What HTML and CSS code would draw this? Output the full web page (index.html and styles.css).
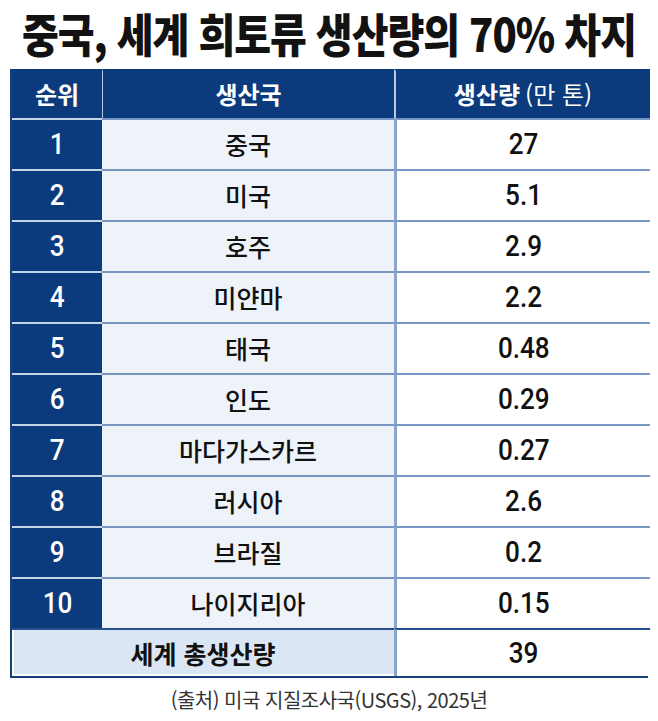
FILE: index.html
```html
<!DOCTYPE html>
<html lang="ko">
<head>
<meta charset="utf-8">
<link rel="stylesheet" href="styles.css">
</head>
<body>
<div class="page">
  <h1 class="title"><span class="title-text">중국, 세계 희토류 생산량의 70% 차지</span></h1>
  <div class="table">
    <div class="cell head head-rank">순위</div>
    <div class="cell head head-name">생산국</div>
    <div class="cell head head-value">생산량 <span class="unit">(만 톤)</span></div>

    <div class="cell rank"><span class="num">1</span></div><div class="cell name">중국</div><div class="cell value"><span class="num">27</span></div>
    <div class="cell rank"><span class="num">2</span></div><div class="cell name">미국</div><div class="cell value"><span class="num">5.1</span></div>
    <div class="cell rank"><span class="num">3</span></div><div class="cell name">호주</div><div class="cell value"><span class="num">2.9</span></div>
    <div class="cell rank"><span class="num">4</span></div><div class="cell name">미얀마</div><div class="cell value"><span class="num">2.2</span></div>
    <div class="cell rank"><span class="num">5</span></div><div class="cell name">태국</div><div class="cell value"><span class="num">0.48</span></div>
    <div class="cell rank"><span class="num">6</span></div><div class="cell name">인도</div><div class="cell value"><span class="num">0.29</span></div>
    <div class="cell rank"><span class="num">7</span></div><div class="cell name">마다가스카르</div><div class="cell value"><span class="num">0.27</span></div>
    <div class="cell rank"><span class="num">8</span></div><div class="cell name">러시아</div><div class="cell value"><span class="num">2.6</span></div>
    <div class="cell rank"><span class="num">9</span></div><div class="cell name">브라질</div><div class="cell value"><span class="num">0.2</span></div>
    <div class="cell rank"><span class="num">10</span></div><div class="cell name">나이지리아</div><div class="cell value"><span class="num">0.15</span></div>

    <div class="cell total-label">세계 총생산량</div>
    <div class="cell total-value"><span class="num">39</span></div>
  </div>
  <p class="source">(출처) 미국 지질조사국(USGS), 2025년</p>
</div>
</body>
</html>
```
FILE: styles.css
```css
* { box-sizing: border-box; }
html, body { margin: 0; padding: 0; background: #ffffff; }
body {
  font-family: Roboto, "Noto Sans CJK KR", sans-serif;
  color: #111111;
}
.page {
  width: 658px;
  height: 721px;
  display: flex;
  flex-direction: column;
  align-items: center;
}
.title {
  margin: 0;
  height: 69px;
  width: 100%;
  display: flex;
  align-items: center;
  justify-content: center;
  padding-bottom: 6px;
  font-family: "Noto Sans CJK KR", sans-serif;
  font-weight: 900;
  font-size: 46px;
  letter-spacing: -1.2px;
  color: #121212;
  white-space: nowrap;
}
.title-text {
  display: inline-block;
  transform: scaleX(0.87);
}
.table {
  width: 638px;
  display: grid;
  grid-template-columns: 90px 292px 256px;
  grid-template-rows: 49px repeat(10, 51px) 48px;
  border-left: 2px solid #173f78;
  border-right: 2px solid #173f78;
  border-bottom: 2px solid #173f78;
}
.cell {
  display: flex;
  align-items: center;
  justify-content: center;
  border-top: 2px solid #7896c3;
  font-size: 29px;
  font-weight: 500;
  line-height: 1;
}
.num {
  display: inline-block;
  transform: scaleX(0.9);
}
.head {
  background: #0b3b7c;
  color: #ffffff;
  border-top: 2px solid #0b3b7c;
  font-family: "Noto Sans CJK KR", sans-serif;
  font-size: 24px;
  font-weight: 700;
  padding-bottom: 2px;
}
.head-name, .head-value { border-left: 1px solid #b9c9e0; }
.head-value { border-left-width: 2px; }
.head .unit { font-weight: 400; margin-left: 5px; }
.rank {
  background: #0b3b7c;
  color: #ffffff;
  border-top: 2px solid #c5d3e8;
}
.name {
  background: #eef3fa;
  font-family: "Noto Sans CJK KR", sans-serif;
  font-size: 25px;
  font-weight: 500;
}
.value {
  background: #ffffff;
  border-left: 3px solid #8aa5ca;
}
.total-label {
  grid-column: 1 / span 2;
  background: #dbe6f4;
  border-top: 2px solid #24508f;
  box-shadow: inset 2px 0 0 #ffffff, inset 0 -2px 0 #ffffff;
  font-family: "Noto Sans CJK KR", sans-serif;
  font-size: 25px;
  font-weight: 700;
}
.total-value {
  background: #ffffff;
  border-top: 2px solid #24508f;
  border-left: 3px solid #8aa5ca;
}
.source {
  margin: 10px 0 0;
  font-family: "Noto Sans CJK KR", sans-serif;
  font-size: 20px;
  line-height: 24px;
  color: #333333;
  letter-spacing: -0.5px;
}
```
